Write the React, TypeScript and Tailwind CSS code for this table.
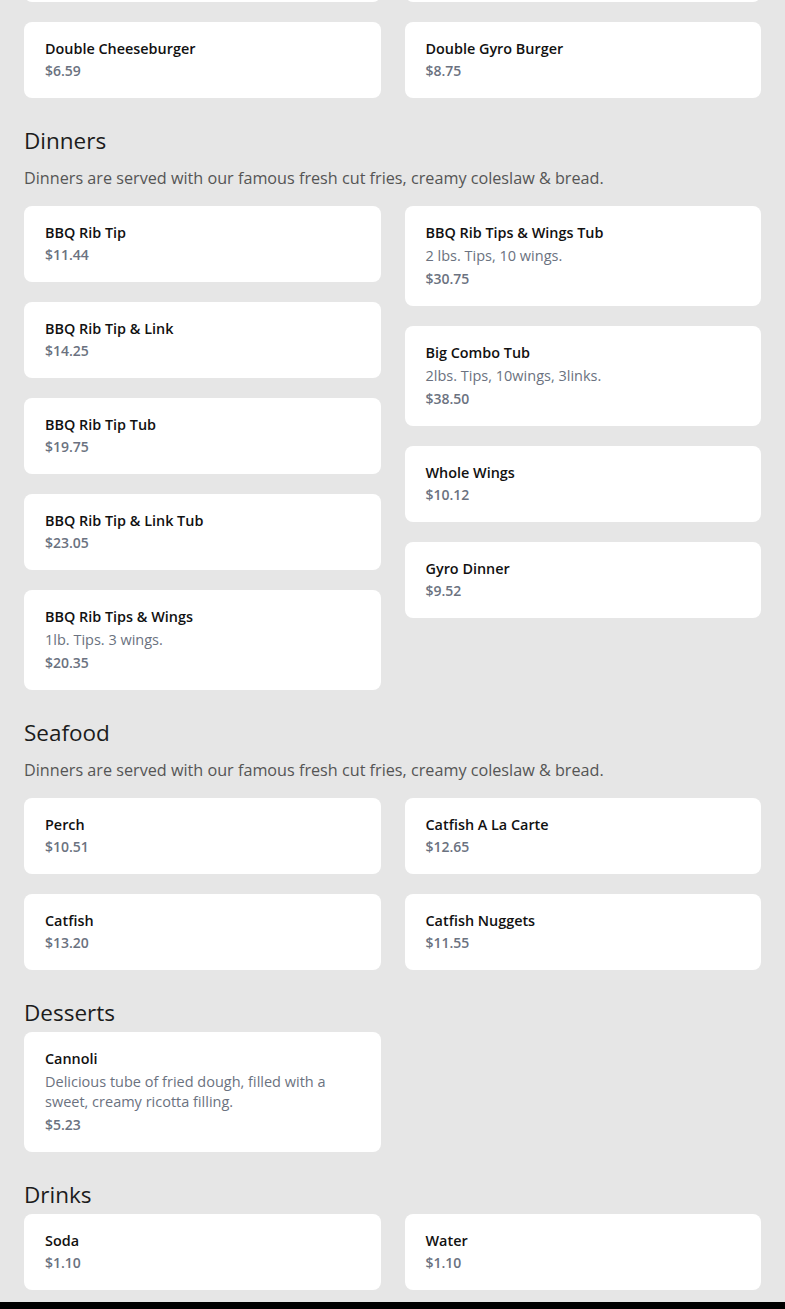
import React from 'react';

type Item = { name: string; price: string; desc?: string };
type Section = { title: string; note?: string; items: Item[] };

const dinnerNote = 'Dinners are served with our famous fresh cut fries, creamy coleslaw & bread.';

const sections: Section[] = [
  {
    title: 'Dinners',
    note: dinnerNote,
    items: [
      { name: 'BBQ Rib Tip', price: '$11.44' },
      { name: 'BBQ Rib Tips & Wings Tub', price: '$30.75', desc: '2 lbs. Tips, 10 wings.' },
      { name: 'BBQ Rib Tip & Link', price: '$14.25' },
      { name: 'Big Combo Tub', price: '$38.50', desc: '2lbs. Tips, 10wings, 3links.' },
      { name: 'BBQ Rib Tip Tub', price: '$19.75' },
      { name: 'Whole Wings', price: '$10.12' },
      { name: 'BBQ Rib Tip & Link Tub', price: '$23.05' },
      { name: 'Gyro Dinner', price: '$9.52' },
      { name: 'BBQ Rib Tips & Wings', price: '$20.35', desc: '1lb. Tips. 3 wings.' },
    ],
  },
  {
    title: 'Seafood',
    note: dinnerNote,
    items: [
      { name: 'Perch', price: '$10.51' },
      { name: 'Catfish A La Carte', price: '$12.65' },
      { name: 'Catfish', price: '$13.20' },
      { name: 'Catfish Nuggets', price: '$11.55' },
    ],
  },
  {
    title: 'Desserts',
    items: [
      {
        name: 'Cannoli',
        price: '$5.23',
        desc: 'Delicious tube of fried dough, filled with a sweet, creamy ricotta filling.',
      },
    ],
  },
  {
    title: 'Drinks',
    items: [
      { name: 'Soda', price: '$1.10' },
      { name: 'Water', price: '$1.10' },
    ],
  },
];

const ItemCard: React.FC<{ item: Item }> = ({ item }) => (
  <div className="bg-white rounded-lg pl-[21px] pr-5 pt-[17px] pb-[17px] flex flex-col">
    <h3 className="text-[14.4px] leading-5 font-semibold text-[#111]">{item.name}</h3>
    {item.desc && (
      <p className="mt-[3px] mb-px text-[14.5px] leading-5 text-[#6b7280]">{item.desc}</p>
    )}
    <span className="mt-[2px] text-sm leading-5 font-semibold text-[#6b7280]">{item.price}</span>
  </div>
);

const MenuSection: React.FC<{ section: Section }> = ({ section }) => {
  const left = section.items.filter((_, i) => i % 2 === 0);
  const right = section.items.filter((_, i) => i % 2 === 1);
  return (
    <section className="mt-[25px]">
      <h2 className="text-[22.5px] leading-9 text-[#1c1c1c]">{section.title}</h2>
      {section.note && (
        <p className="mt-[7px] mb-4 text-[16.2px] leading-6 text-[#555]">{section.note}</p>
      )}
      <div className="mt-px grid grid-cols-2 gap-6 items-start">
        <div className="flex flex-col gap-5">
          {left.map((item) => (
            <ItemCard key={item.name} item={item} />
          ))}
        </div>
        <div className="flex flex-col gap-5">
          {right.map((item) => (
            <ItemCard key={item.name} item={item} />
          ))}
        </div>
      </div>
    </section>
  );
};

export default function App() {
  return (
    <div className="min-h-screen bg-[#e6e6e6] font-['Open_Sans',sans-serif] overflow-hidden">
      <div className="px-6 -mt-[74px]">
        {/* tail of the section above, scrolled out of view */}
        <div className="grid grid-cols-2 gap-6">
          <div className="bg-white rounded-lg h-[76px]" />
          <div className="bg-white rounded-lg h-[76px]" />
        </div>
        <div className="mt-5 grid grid-cols-2 gap-6">
          <ItemCard item={{ name: 'Double Cheeseburger', price: '$6.59' }} />
          <ItemCard item={{ name: 'Double Gyro Burger', price: '$8.75' }} />
        </div>
        {sections.map((s) => (
          <MenuSection key={s.title} section={s} />
        ))}
      </div>
      <footer className="mt-3 h-10 bg-black" />
    </div>
  );
}
